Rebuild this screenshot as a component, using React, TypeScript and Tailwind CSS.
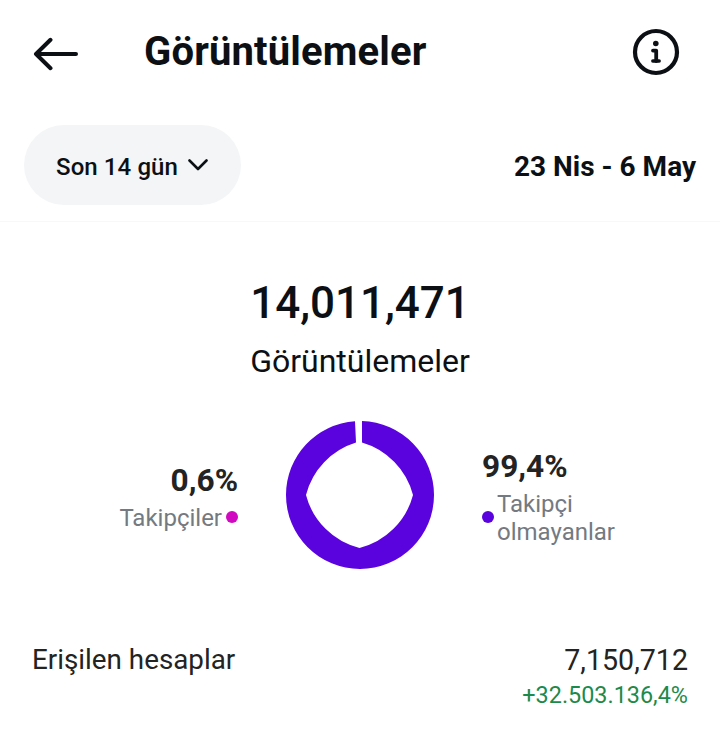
const accounts = [
  { label: "Erişilen hesaplar", value: "7,150,712", change: "+32.503.136,4%" },
];

function BackArrow() {
  return (
    <svg width="46" height="34" viewBox="0 0 46 34" fill="none" stroke="#0c1014" strokeWidth="4" strokeLinecap="round" strokeLinejoin="round">
      <path d="M44 17H4M18.5 2.8L4 17L18.5 31.2" />
    </svg>
  );
}

function InfoIcon() {
  return (
    <svg width="48" height="48" viewBox="0 0 48 48" fill="none" stroke="#0c1014" strokeLinecap="round" strokeLinejoin="round">
      <circle cx="24" cy="24" r="21" strokeWidth="4.2" />
      <circle cx="23.8" cy="15.5" r="2.8" fill="#0c1014" stroke="none" />
      <path d="M21 22.6H24.2V33" strokeWidth="3.8" />
      <path d="M20.8 33H27.2" strokeWidth="3.4" />
    </svg>
  );
}

function DonutChart() {
  return (
    <svg width="148" height="148" viewBox="0 0 148 148" fill="#5a03de">
      <path d="M69 0.17A74 74 0 0 0 0 74A74 74 0 0 0 74 148A74 74 0 0 0 148 74A74 74 0 0 0 76 0.03V21.6A74 74 0 0 1 127 74A74 74 0 0 1 73.5 127A74 74 0 0 1 20 74A74 74 0 0 1 70 21.6Z" />
    </svg>
  );
}

export default function App() {
  return (
    <div className="w-full h-[748px] bg-white text-[#0c1014] font-['Roboto',sans-serif] overflow-hidden">
      <header className="h-[222px] border-b border-[#f7f8f9]">
        <div className="flex items-center h-[104px] pl-8 pr-10">
          <button className="mt-1">
            <BackArrow />
          </button>
          <h1 className="ml-[66px] text-[40px] leading-none font-bold tracking-[0.15px] whitespace-nowrap">Görüntülemeler</h1>
          <button className="ml-auto">
            <InfoIcon />
          </button>
        </div>
        <div className="flex items-center justify-between mt-[21px] h-20 pl-6 pr-6">
          <button className="flex items-center h-20 w-[217px] pl-8 rounded-full bg-[#f3f5f7] text-2xl font-medium whitespace-nowrap">
            <span className="mt-[3px] tracking-[0.1px]">Son 14 gün</span>
            <svg className="ml-2.5" width="20" height="12" viewBox="0 0 20 12" fill="none" stroke="#0c1014" strokeWidth="2.6" strokeLinecap="round" strokeLinejoin="round">
              <path d="M1.5 1.5L10 10L18.5 1.5" />
            </svg>
          </button>
          <span className="mt-1 text-[28px] leading-8 font-bold whitespace-nowrap">23 Nis - 6 May</span>
        </div>
      </header>

      <section className="flex flex-col items-center pt-[55px]">
        <div className="text-[44px] leading-[52px] font-medium">14,011,471</div>
        <div className="mt-3 text-[32px] leading-[40px]">Görüntülemeler</div>
      </section>

      <section className="grid grid-cols-[238px_244px_238px] h-[148px] mt-10">
        <div className="flex flex-col items-end pt-[42px]">
          <div className="text-[31.6px] leading-9 font-bold text-[#232323]">0,6%</div>
          <div className="flex items-center mt-[5px] gap-1 text-2xl leading-7 text-[#737a82]">
            Takipçiler
            <span className="size-3 mb-0.5 rounded-full bg-[#d109c0]" />
          </div>
        </div>
        <div className="flex justify-center">
          <DonutChart />
        </div>
        <div className="flex flex-col items-start pt-7">
          <div className="text-[31.6px] leading-9 font-bold text-[#232323]">99,4%</div>
          <div className="flex items-center mt-[5px] gap-[3px] text-2xl leading-7 text-[#737a82]">
            <span className="size-3 mb-0.5 rounded-full bg-[#5a03de]" />
            <span>
              Takipçi
              <br />
              olmayanlar
            </span>
          </div>
        </div>
      </section>

      {accounts.map((row) => (
        <section key={row.label} className="flex justify-between mt-[73px] pl-8 pr-8 text-[27.8px] leading-9 text-[#232323]">
          <div>{row.label}</div>
          <div className="text-right">
            <div className="text-[28.6px]">{row.value}</div>
            <div className="text-[23.4px] leading-[34px] text-[#1d8a4b]">{row.change}</div>
          </div>
        </section>
      ))}
    </div>
  );
}
